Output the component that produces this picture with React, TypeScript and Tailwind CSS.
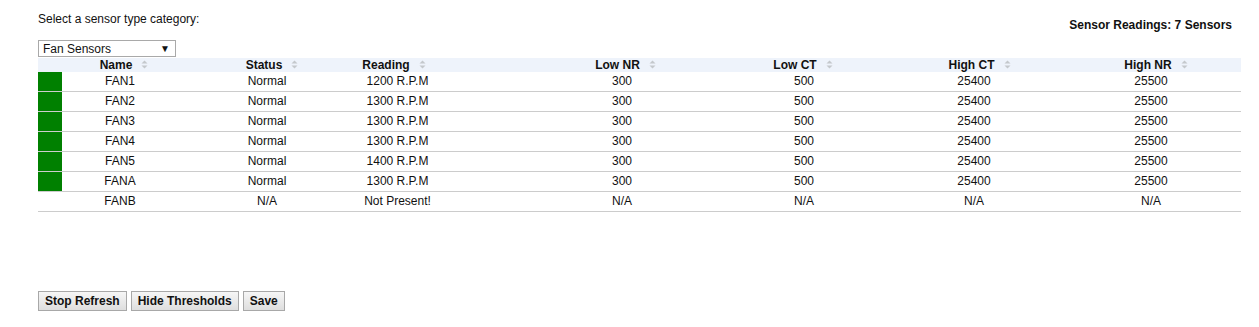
import React from "react";

type Sensor = {
  name: string;
  status: string;
  reading: string;
  lowNr: string;
  lowCt: string;
  highCt: string;
  highNr: string;
  ok: boolean;
};

const sensors: Sensor[] = [
  { name: "FAN1", status: "Normal", reading: "1200 R.P.M", lowNr: "300", lowCt: "500", highCt: "25400", highNr: "25500", ok: true },
  { name: "FAN2", status: "Normal", reading: "1300 R.P.M", lowNr: "300", lowCt: "500", highCt: "25400", highNr: "25500", ok: true },
  { name: "FAN3", status: "Normal", reading: "1300 R.P.M", lowNr: "300", lowCt: "500", highCt: "25400", highNr: "25500", ok: true },
  { name: "FAN4", status: "Normal", reading: "1300 R.P.M", lowNr: "300", lowCt: "500", highCt: "25400", highNr: "25500", ok: true },
  { name: "FAN5", status: "Normal", reading: "1400 R.P.M", lowNr: "300", lowCt: "500", highCt: "25400", highNr: "25500", ok: true },
  { name: "FANA", status: "Normal", reading: "1300 R.P.M", lowNr: "300", lowCt: "500", highCt: "25400", highNr: "25500", ok: true },
  { name: "FANB", status: "N/A", reading: "Not Present!", lowNr: "N/A", lowCt: "N/A", highCt: "N/A", highNr: "N/A", ok: false },
];

// header label, header offset, body offset
const columns: { key: keyof Sensor; title: string; head: string; body: string }[] = [
  { key: "name", title: "Name", head: "pr-[24px]", body: "pr-[16px]" },
  { key: "status", title: "Status", head: "pl-[2px]", body: "pl-[8px]" },
  { key: "reading", title: "Reading", head: "pr-[70px]", body: "pr-[47px]" },
  { key: "lowNr", title: "Low NR", head: "pl-[12px]", body: "pl-[21px]" },
  { key: "lowCt", title: "Low CT", head: "pr-[12px]", body: "pl-[6px]" },
  { key: "highCt", title: "High CT", head: "pr-[9px]", body: "pr-[4px]" },
  { key: "highNr", title: "High NR", head: "pr-[8px]", body: "pr-[2px]" },
];

const gridCols = "grid grid-cols-[24px_132px_138px_178px_203px_176px_174px_178px]";

const SortIcon = () => (
  <svg width="7" height="9" viewBox="0 0 7 9" className="absolute left-full top-[2px] ml-[9px]">
    <path d="M3.5 0.5 L6.5 3.5 L0.5 3.5 Z" fill="#c4c8cc" />
    <path d="M3.5 8.5 L6.5 5.5 L0.5 5.5 Z" fill="#c4c8cc" />
  </svg>
);

const Button = ({ children }: { children: React.ReactNode }) => (
  <button className="h-[20px] border border-[#a8a8a8] bg-gradient-to-b from-[#f6f6f6] to-[#dedede] px-[6px] text-[12px] font-bold leading-none text-[#111]">
    {children}
  </button>
);

export default function App() {
  return (
    <div className="min-h-[327px] w-[1259px] bg-white pl-[38px] pr-[18px] pt-[12px] font-['Liberation_Sans',Arial,sans-serif] text-[12px] text-[#111]">
      <div className="flex items-start justify-between">
        <div>
          <p className="leading-[14px]">Select a sensor type category:</p>
          <div className="mt-[14px] flex h-[17px] w-[138px] items-center justify-between border border-[#a9a9a9] pl-[4px] pr-[5px] leading-none">
            <span>Fan Sensors</span>
            <span className="text-[10px]">▼</span>
          </div>
        </div>
        <p className="mr-[9px] mt-[6px] font-bold leading-[14px]">Sensor Readings: 7 Sensors</p>
      </div>

      <div className="mt-[1px] w-[1203px]">
        <div className={`${gridCols} h-[14px] bg-[#eef3fb] font-bold leading-[14px]`}>
          <div />
          {columns.map((c) => (
            <div key={c.key} className={`flex justify-center ${c.head}`}>
              <span className="relative">
                {c.title}
                <SortIcon />
              </span>
            </div>
          ))}
        </div>
        {sensors.map((s) => (
          <div key={s.name} className={`${gridCols} h-[20px] border-b border-[#cccccc] leading-[19px]`}>
            <div className={s.ok ? "bg-[#008000]" : ""} />
            {columns.map((c) => (
              <div key={c.key} className={`text-center ${c.body}`}>
                {s[c.key] as string}
              </div>
            ))}
          </div>
        ))}
      </div>

      <div className="mt-[79px] flex gap-[4px]">
        <Button>Stop Refresh</Button>
        <Button>Hide Thresholds</Button>
        <Button>Save</Button>
      </div>
    </div>
  );
}
